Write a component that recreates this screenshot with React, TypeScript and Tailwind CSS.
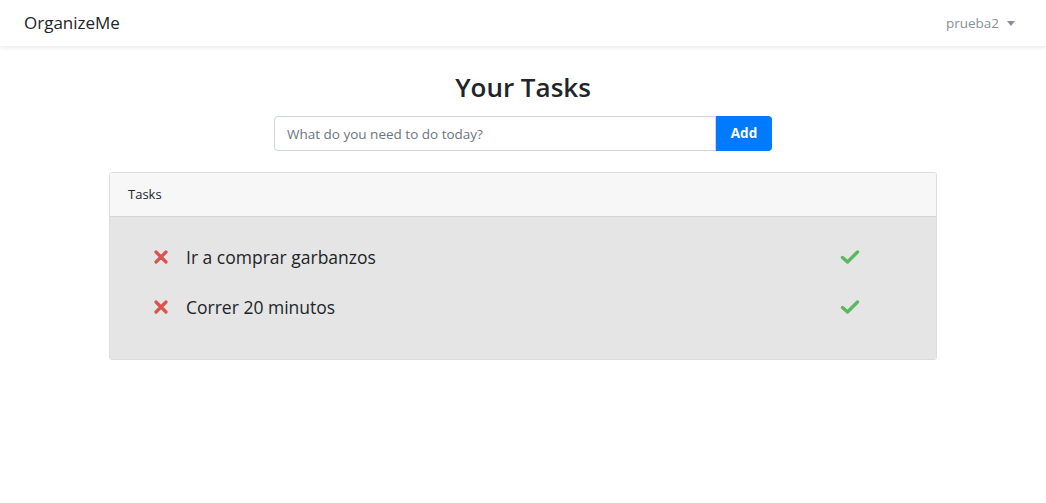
import { useState } from 'react';

const tasks = ['Ir a comprar garbanzos', 'Correr 20 minutos'];

const TimesIcon = () => (
  <svg width="14" height="14" viewBox="0 0 14 14" className="shrink-0">
    <path d="M2 2 L12 12 M12 2 L2 12" stroke="#d9534f" strokeWidth="3.2" strokeLinecap="round" />
  </svg>
);

const CheckIcon = () => (
  <svg width="20" height="16" viewBox="0 0 20 16" className="shrink-0">
    <path d="M2.5 8.5 L7.5 13 L17.5 3" stroke="#5cb85c" strokeWidth="3.4" strokeLinecap="round" strokeLinejoin="round" fill="none" />
  </svg>
);

export default function App() {
  const [text, setText] = useState('');

  return (
    <div className="min-h-screen bg-white text-[#212529]" style={{ fontFamily: '"Open Sans", "Noto Sans", sans-serif' }}>
      {/* Navbar */}
      <nav className="h-[46px] flex items-center justify-between px-6 bg-white shadow-[0_2px_4px_rgba(0,0,0,0.08)]">
        <span className="text-[17px] text-[#212529]">OrganizeMe</span>
        <button className="flex items-center gap-2 text-[13.5px] text-[#8a8f94] mr-[7px]">
          prueba2
          <span className="w-0 h-0 border-l-[4px] border-r-[4px] border-t-[5px] border-l-transparent border-r-transparent border-t-[#8a8f94]" />
        </button>
      </nav>

      <main className="flex flex-col items-center pt-[23px]">
        <h1 className="text-[26px] font-semibold leading-[36px] text-[#212529]">Your Tasks</h1>

        <div className="flex mt-[11px]">
          <input
            value={text}
            onChange={e => setText(e.target.value)}
            placeholder="What do you need to do today?"
            className="w-[442px] h-[35px] px-3 text-[13.5px] border border-[#ced4da] rounded-l-[4px] outline-none placeholder:text-[#6c757d]"
          />
          <button className="w-[56px] h-[35px] bg-[#007bff] text-white text-[13.5px] font-bold rounded-r-[4px]">
            Add
          </button>
        </div>

        <div className="w-[828px] mt-[21px] border border-[#dcdcdc] rounded-[3px] overflow-hidden">
          <div className="h-[44px] flex items-center px-[18px] bg-[#f7f7f7] border-b border-[#d6d6d6] text-[13px]">
            Tasks
          </div>
          <ul className="bg-[#e5e5e5] pt-[15px] pb-[27px] pl-[44px] pr-[76px]">
            {tasks.map(t => (
              <li key={t} className="h-[50px] flex items-center justify-between">
                <div className="flex items-center gap-[18px]">
                  <TimesIcon />
                  <span className="text-[17.5px] text-[#212529]">{t}</span>
                </div>
                <CheckIcon />
              </li>
            ))}
          </ul>
        </div>
      </main>
    </div>
  );
}
